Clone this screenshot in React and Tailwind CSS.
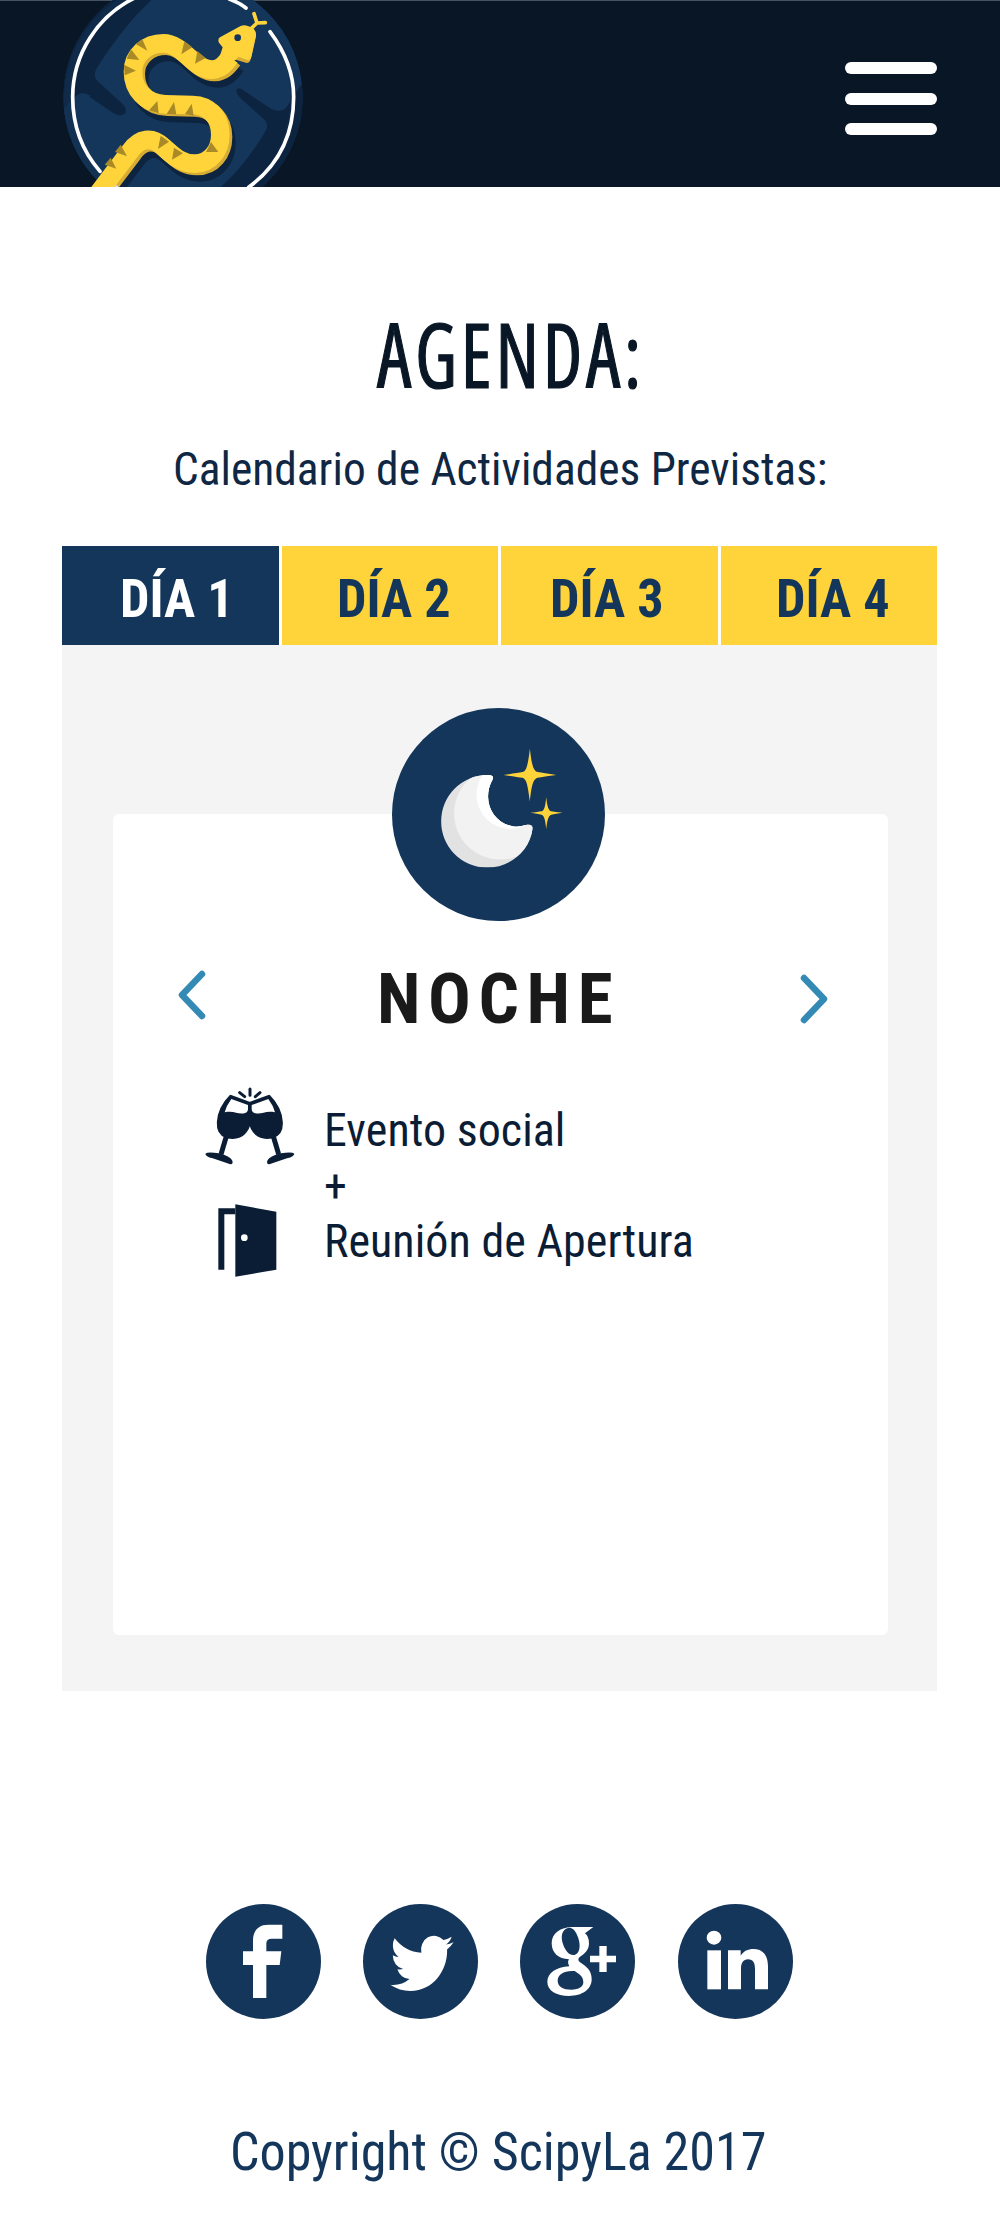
const body =
  "M134 594L240 454C268 414 306 408 340 441C375 473 396 491 434 491C480 491 511 452 511 404C511 352 477 316 428 315L345 313C288 311 249 270 249 215C249 165 290 130 340 130C400 130 430 210 486 209C510 208 524 194 540 172";

function Logo() {
  return (
    <svg className="block h-[187px] w-[270px]" viewBox="0 0 810 561">
      <defs>
        <clipPath id="disc">
          <circle cx="399" cy="291" r="359" />
        </clipPath>
      </defs>
      <circle cx="399" cy="291" r="359" fill="#15365b" />
      <g clipPath="url(#disc)">
        <path d="M305 0C255 45 200 110 140 205Q128 228 142 242L215 310Q235 328 222 340Q210 350 190 340L120 288Q95 268 70 295L40 330V0Z" fill="#0d2440" />
        <path d="M765 240Q735 275 712 318Q698 340 665 328L588 276Q566 258 560 268Q556 280 575 298L642 358Q658 372 647 392C610 455 565 515 512 561H810V240Z" fill="#0d2440" />
        <path d="M40 345Q65 270 118 285L215 350Q265 400 235 430L100 600L40 500Z" fill="#15365b" />
        <path d="M135 270L200 310Q235 330 224 342Q212 352 185 336L118 290Z" fill="#0d2440" />
        <path d="M42 291A359 359 0 0 1 200 0H250A331 331 0 0 0 68 291Q75 430 150 520L140 561A359 359 0 0 1 42 291Z" fill="#12304f" opacity=".65" />
        <path d="M570 0A359 359 0 0 1 600 561H590Q730 450 730 291Q730 130 655 85Z" fill="#12304f" opacity=".55" />
      </g>
      <path d="M538 -3Q568 8 588 24M660 95Q731 190 731 291C731 410 680 500 596 562M260 -9A331 331 0 0 0 68 291Q68 420 150 514" fill="none" stroke="#fff" strokeWidth="11" strokeLinecap="round" />
      <path d={body} transform="translate(17 25)" fill="none" stroke="#0d2440" strokeWidth="58" />
      <path d={body} transform="translate(8 7)" fill="none" stroke="#d6ac35" strokeWidth="56" />
      <path d="M520 145L505 180L560 180L590 189Q600 189 602 178L617 110L600 90Z" fill="#d6ac35" />
      <path d={body} fill="none" stroke="#ffd43b" strokeWidth="56" />
      <path d="M510 112L565 82Q580 70 600 80Q620 88 618 108L604 172Q600 185 586 178L566 170L540 194L505 184L518 142L507 128Q502 118 510 112Z" fill="#ffd43b" />
      <path d="M604 85L621 69M621 69L612 41M621 69L646 68" fill="none" stroke="#ffd43b" strokeWidth="11" strokeLinecap="round" />
      <circle cx="563" cy="113" r="10" fill="#15365b" />
      <g fill="#a98a27">
        <path d="M257 132L277 118L292 152Z" />
        <path d="M230 176L243 148L268 180Z" />
        <path d="M222 194L258 212L224 226Z" />
        <path d="M403 124L427 142L394 163Z" />
        <path d="M442 153L467 174L435 191Z" />
        <path d="M322 303L326 340L297 331Z" />
        <path d="M372 306L379 343L350 342Z" />
        <path d="M425 311L431 347L405 342Z" />
        <path d="M483 426L505 456L468 456Z" />
        <path d="M332 407L357 425L324 447Z" />
        <path d="M372 443L399 460L366 479Z" />
        <path d="M212 434L231 469L195 456Z" />
        <path d="M182 473L199 506L164 494Z" />
      </g>
      <path d="M192 561L199 554L207 561Z" fill="#d7d7d7" />
    </svg>
  );
}

function Moon() {
  return (
    <svg className="block size-[213px]" viewBox="66 56 638 638">
      <defs>
        <clipPath id="crescent">
          <path d="M350 257Q374 256 367 271C334 330 365 400 430 411Q450 413 471 406Q488 403 487 418C478 485 420 534 350 534A137 138.500 0 0 1 350 257Z" />
        </clipPath>
      </defs>
      <circle cx="385" cy="375" r="319" fill="#15365b" />
      <g clipPath="url(#crescent)">
        <rect x="200" y="240" width="300" height="300" fill="#e2e2e2" />
        <circle cx="390" cy="372" r="138" fill="#f2f2f2" />
        <circle cx="421" cy="316" r="102" fill="#fff" />
      </g>
      <g fill="#ffd43b">
        <path d="M479 178C485 235 492 245 502 248Q520 251 558 257Q520 262 502 265C490 270 485 280 479 336C472 280 468 270 457 265Q440 262 400 257Q440 251 457 248C468 244 472 235 479 178Z" />
        <path d="M528 323C531 352 535 363 543 365Q555 367 577 370Q555 373 543 376C535 379 531 390 528 419C525 390 522 379 514 376Q503 373 480 370Q503 367 514 365C522 363 525 352 528 323Z" />
      </g>
    </svg>
  );
}

function Glass() {
  return (
    <g>
      <path d="M124 78Q90 112 87 155Q85 190 112 199Q145 206 162 190Q178 174 181 152V99Z" fill="#0b1d35" stroke="#0b1d35" strokeWidth="9" strokeLinejoin="round" />
      <path d="M126 86L176 104V117Q175 127 165 129C145 133 135 120 106 126Q111 106 126 86Z" fill="#fff" />
      <path d="M112 195L95 252" stroke="#0b1d35" strokeWidth="15" />
      <path d="M48 250Q55 244 88 249L104 253Q130 263 130 275Q130 283 123 282L70 264Q48 258 48 250Z" fill="#0b1d35" />
    </g>
  );
}

function Cheers() {
  return (
    <svg className="block h-[78px] w-[90px]" viewBox="47 50 270 234">
      <Glass />
      <g transform="translate(363 0) scale(-1 1)">
        <Glass />
      </g>
      <path d="M182 56V75M151 67L166 79M212 67L198 79" stroke="#0b1d35" strokeWidth="9" strokeLinecap="round" />
    </svg>
  );
}

function Door() {
  return (
    <svg className="block h-[73px] w-[59px]" viewBox="83 403 177 219" fill="#0b1d35">
      <path d="M84 416H135V434H102V600H84Z" />
      <path d="M135 404L258 426V600L135 621Z" />
      <circle cx="162" cy="504" r="10" fill="#fff" />
    </svg>
  );
}

const social = [
  {
    name: "Facebook",
    art: (
      <path transform="translate(-48 -42)" d="M189 324V225H159V184H189V152C189 122 205 104 235 104H277V146H245Q229 146 229 160V184H274L269 225H229V324Z" />
    ),
  },
  {
    name: "Twitter",
    art: (
      <path transform="translate(82 76) scale(7.9 8.5)" d="M23.953 4.570a10 10 0 01-2.825.775 4.958 4.958 0 002.163-2.723c-.951.555-2.005.959-3.127 1.184a4.920 4.920 0 00-8.384 4.482C7.690 8.095 4.067 6.130 1.640 3.162a4.822 4.822 0 00-.666 2.475c0 1.710.870 3.213 2.188 4.096a4.904 4.904 0 01-2.228-.616v.060a4.923 4.923 0 003.946 4.827 4.996 4.996 0 01-2.212.085 4.936 4.936 0 004.604 3.417 9.867 9.867 0 01-6.102 2.105c-.390 0-.779-.023-1.170-.067a13.995 13.995 0 007.557 2.209c9.053 0 13.998-7.496 13.998-13.985 0-.210 0-.420-.015-.630A9.935 9.935 0 0024 4.590z" />
    ),
  },
  {
    name: "Google Plus",
    art: (
      <g transform="translate(-60 -42)">
        <path fillRule="evenodd" d="M280 111L255 130Q267 140 267 160C267 180 255 191 240 200Q230 208 240 217C258 229 275 240 275 268C275 299 246 318 207 318C169 318 142 302 142 276C142 249 168 232 208 229Q201 217 207 208C175 207 155 188 155 160C155 130 181 111 218 111ZM204 114C185 118 181 142 190 165C198 186 210 198 225 194C241 189 242 164 234 142C227 122 217 111 204 114ZM216 243C190 244 173 254 173 272C173 290 190 299 214 299C237 299 250 290 250 276C250 258 235 251 224 243Z" />
        <path d="M298 168H320V197H348V217H320V246H298V217H270V197H298Z" />
      </g>
    ),
  },
  {
    name: "LinkedIn",
    art: (
      <g transform="translate(-534 -42)">
        <ellipse cx="642" cy="143" rx="22" ry="21" />
        <path d="M622 181H663V298H622Z" />
        <path d="M684 298V181H722V197C731 183 744 177 760 177C790 177 804 197 804 230V298H765V238C765 219 760 208 744 208C730 208 723 219 723 236V298Z" />
      </g>
    ),
  },
];

const tabs = [
  { label: "DÍA 1", style: "bg-[#15365b] text-white pl-[58px]" },
  { label: "DÍA 2", style: "bg-[#ffd43b] text-[#15365b] pl-[55px]" },
  { label: "DÍA 3", style: "bg-[#ffd43b] text-[#15365b] pl-[49px]" },
  { label: "DÍA 4", style: "bg-[#ffd43b] text-[#15365b] pl-[55px]" },
];

export default function App() {
  return (
    <div className="h-[2227px] w-[1000px] overflow-hidden bg-white font-['Roboto_Condensed',Roboto,sans-serif] whitespace-nowrap [font-stretch:75%]">
      <header className="flex h-[187px] justify-between border-t border-[#46525f] bg-[#091625] pr-[63px] pl-[50px]">
        <div className="-mt-px">
          <Logo />
        </div>
        <button aria-label="Menú" className="mt-[61px] flex h-[73px] w-[92px] flex-col justify-between">
          <span className="h-[12px] w-full rounded-full bg-white" />
          <span className="h-[12px] w-full rounded-full bg-white" />
          <span className="h-[12px] w-full rounded-full bg-white" />
        </button>
      </header>

      <h1 className="mt-[116px] ml-[377px] w-fit origin-left scale-x-[.86] font-['Open_Sans',sans-serif] text-[90px] leading-[100px] font-medium tracking-[4.4px] text-[#091625] [-webkit-text-stroke:1.2px_#091625]">AGENDA:</h1>
      <p className="mt-[38px] ml-[173px] w-fit origin-left scale-x-[.967] text-[47px] leading-[56px] text-[#0f2743]">Calendario de Actividades Previstas:</p>

      <main className="mt-[49px] ml-[62px] flow-root h-[1145px] w-[875px] bg-[#f4f4f4]">
        <nav className="grid h-[99px] grid-cols-4 gap-[3px] bg-white">
          {tabs.map((t) => (
            <button key={t.label} className={`${t.style} pt-[8px] text-left text-[53px] leading-[91px] font-bold`}>
              <span className="inline-block origin-left scale-x-[.985]">{t.label}</span>
            </button>
          ))}
        </nav>
        <section className="mt-[169px] ml-[51px] flow-root h-[821px] w-[775px] rounded-[6px] bg-white">
          <div className="-mt-[106px] flex justify-center pr-[4px]">
            <Moon />
          </div>
          <div className="mt-[35px] flex h-[84px] items-start">
            <svg className="mt-[14px] ml-[64px] h-[50px] w-[30px]" viewBox="0 0 30 50" fill="none" stroke="#338ab5" strokeWidth="6.5" strokeLinecap="round" strokeLinejoin="round">
              <path d="M25 4L5 25L25 46" />
            </svg>
            <h2 className="ml-[170px] w-[250px] pt-px text-[71px] leading-[84px] font-bold tracking-[7.6px] text-[#1a1a1a]">NOCHE</h2>
            <svg className="mt-[18px] ml-[172px] h-[50px] w-[30px]" viewBox="0 0 30 50" fill="none" stroke="#338ab5" strokeWidth="6.5" strokeLinecap="round" strokeLinejoin="round">
              <path d="M5 4L25 25L5 46" />
            </svg>
          </div>
          <div className="mt-[47px] flex">
            <div className="ml-[92px] w-[119px]">
              <Cheers />
              <div className="mt-[39px] ml-[13px]">
                <Door />
              </div>
            </div>
            <div className="mt-[16px] text-[46px] leading-[55.5px] tracking-[0.05px] text-[#0b1d35]">
              <p>Evento social</p>
              <p>+</p>
              <p>Reunión de Apertura</p>
            </div>
          </div>
        </section>
      </main>

      <footer>
        <div className="mt-[213px] ml-[206px] flex gap-[42.2px]">
          {social.map((s) => (
            <a key={s.name} aria-label={s.name}>
              <svg className="block size-[115px]" viewBox="0 0 345 345" fill="#fff">
                <circle cx="172.500" cy="172.500" r="172.500" fill="#15365b" />
                {s.art}
              </svg>
            </a>
          ))}
        </div>
        <p className="mt-[101px] ml-[230px] w-fit origin-left scale-x-[.983] text-[53px] leading-[64px] text-[#15365b]">Copyright © ScipyLa 2017</p>
      </footer>
    </div>
  );
}
